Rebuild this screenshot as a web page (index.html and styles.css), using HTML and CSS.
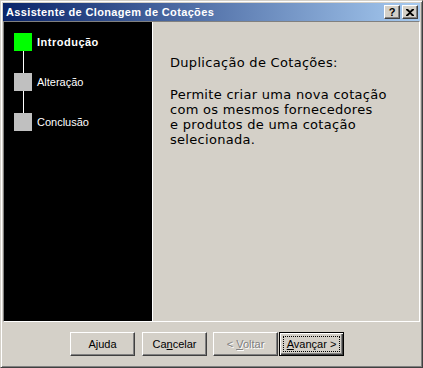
FILE: index.html
```html
<!DOCTYPE html>
<html>
<head>
<meta charset="utf-8">
<link rel="stylesheet" href="styles.css">
</head>
<body>
<div class="window">
  <div class="titlebar">
    <span class="title">Assistente de Clonagem de Cotações</span>
    <div class="tbtns">
      <span class="tbtn help">?</span>
      <span class="tbtn close"><svg width="8" height="7" viewBox="0 0 8 7"><path d="M0 0h2l2 2 2-2h2v1L5 3.5 8 6v1H6L4 5 2 7H0V6l3-2.5L0 1z" fill="#000"/></svg></span>
    </div>
  </div>
  <div class="panel">
    <div class="sidebar">
      <div class="steps">
        <div class="line"></div>
        <div class="step active"><span class="sq"></span><span class="lbl">Introdução</span></div>
        <div class="step"><span class="sq"></span><span class="lbl">Alteração</span></div>
        <div class="step"><span class="sq"></span><span class="lbl">Conclusão</span></div>
      </div>
    </div>
    <div class="content">
      <p class="head">Duplicação de Cotações:</p>
      <p class="body">Permite criar uma nova cotação<br>com os mesmos fornecedores<br>e produtos de uma cotação<br>selecionada.</p>
    </div>
  </div>
  <div class="buttons">
    <span class="btn b-ajuda"><span class="cap">A<u>j</u>uda</span></span>
    <span class="btn b-cancel"><span class="cap">Ca<u>n</u>celar</span></span>
    <span class="btn b-voltar disabled"><span class="cap">&lt; <u>V</u>oltar</span></span>
    <span class="btn b-next default"><span class="focus"><span class="cap"><u>A</u>vançar &gt;</span></span></span>
  </div>
</div>
</body>
</html>
```
FILE: styles.css
```css
html, body {
  margin: 0;
  padding: 0;
  background: #d4d0c8;
}
.window {
  width: 423px;
  height: 368px;
  box-sizing: border-box;
  border: 1px solid;
  border-color: #d4d0c8 #404040 #404040 #d4d0c8;
  box-shadow: inset 1px 1px #fff, inset -1px -1px #808080;
  padding: 2px;
  display: flex;
  flex-direction: column;
  background: #d4d0c8;
  font-family: "Liberation Sans", Arial, sans-serif;
}
.titlebar {
  height: 18px;
  flex: none;
  display: flex;
  align-items: center;
  justify-content: space-between;
  background: linear-gradient(to right, #0a246a, #a6caf0);
  padding: 0 2px 0 3px;
}
.title {
  color: #fff;
  font-weight: bold;
  font-size: 11px;
  letter-spacing: 0.35px;
  line-height: 18px;
}
.tbtns {
  display: flex;
  gap: 2px;
}
.tbtn {
  width: 16px;
  height: 14px;
  box-sizing: border-box;
  border: 1px solid;
  border-color: #fff #404040 #404040 #fff;
  box-shadow: inset -1px -1px #808080;
  background: #d4d0c8;
  display: flex;
  align-items: center;
  justify-content: center;
  font-size: 11px;
  font-weight: bold;
  line-height: 12px;
  color: #000;
}
.panel {
  height: 301px;
  flex: none;
  box-sizing: border-box;
  border: 1px solid;
  border-color: #808080 #fff #fff #808080;
  display: flex;
}
.sidebar {
  width: 149px;
  flex: none;
  box-sizing: border-box;
  background: #000;
  border-right: 1px solid #fff;
  padding: 11px 0 0 10px;
}
.steps {
  position: relative;
  display: flex;
  flex-direction: column;
  gap: 22px;
}
.line {
  position: absolute;
  left: 9px;
  top: 18px;
  width: 1px;
  height: 62px;
  background: #fff;
}
.step {
  display: flex;
  align-items: center;
  height: 18px;
  position: relative;
}
.sq {
  width: 18px;
  height: 18px;
  background: #c0c0c0;
  flex: none;
}
.step.active .sq {
  background: #00ff00;
}
.lbl {
  margin-left: 5px;
  color: #fff;
  font-size: 11px;
  line-height: 13px;
}
.step.active .lbl {
  font-weight: bold;
  letter-spacing: 0.5px;
}
.content {
  flex: 1;
  padding: 33px 0 0 17px;
  font-family: "DejaVu Sans", sans-serif;
  font-size: 13px;
  line-height: 15px;
  color: #000;
  letter-spacing: 0.3px;
}
.content p {
  margin: 0;
}
.content .head {
  margin-bottom: 17px;
}
.buttons {
  flex: 1;
  display: flex;
  align-items: flex-start;
  padding: 10px 0 0 67px;
}
.btn {
  width: 65px;
  height: 24px;
  box-sizing: border-box;
  border: 1px solid;
  border-color: #fff #404040 #404040 #fff;
  box-shadow: inset -1px -1px #808080;
  background: #d4d0c8;
  display: flex;
  align-items: center;
  justify-content: center;
  font-size: 11px;
  color: #000;
}
.cap {
  white-space: pre;
}
.b-cancel { margin-left: 7px; }
.b-voltar { margin-left: 6px; }
.b-next { margin-left: 1px; }
.btn.disabled {
  color: #808080;
  text-shadow: 1px 1px #fff;
}
.btn.default {
  border: 1px solid #000;
  box-shadow: inset 1px 1px #fff, inset -1px -1px #404040, inset -2px -2px #808080;
  padding: 3px;
}
.focus {
  flex: 1;
  align-self: stretch;
  border: 1px dotted #000;
  display: flex;
  align-items: center;
  justify-content: center;
}
```
